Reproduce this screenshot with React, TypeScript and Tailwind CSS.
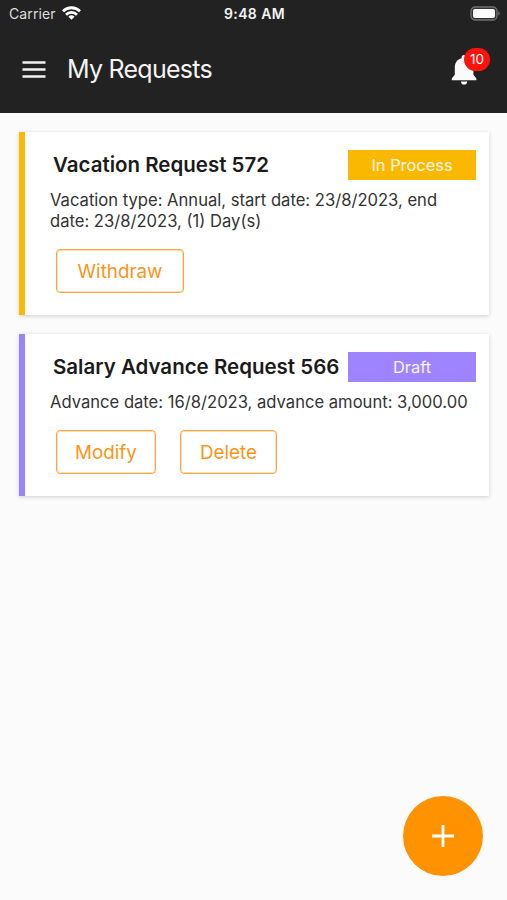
import { useState } from 'react';

const requests = [
    {
        id: 572,
        title: 'Vacation Request 572',
        status: 'In Process',
        border: 'border-[#fbb908]',
        badge: 'bg-[#fbb800]',
        details: 'Vacation type: Annual, start date: 23/8/2023, end date: 23/8/2023, (1) Day(s)',
        actions: [{ label: 'Withdraw', width: 'w-32' }],
    },
    {
        id: 566,
        title: 'Salary Advance Request 566',
        status: 'Draft',
        border: 'border-[#9a83fb]',
        badge: 'bg-[#9e85ff]',
        details: 'Advance date: 16/8/2023, advance amount: 3,000.00',
        actions: [
            { label: 'Modify', width: 'w-[100px]' },
            { label: 'Delete', width: 'w-[97px]' },
        ],
    },
];

function StatusBar() {
    return (
        <div className="grid h-[26px] grid-cols-3 items-center pl-[9px] pr-[7px]">
            <div className="flex items-center gap-1.5 text-[14px] tracking-[0.1px] text-[#dedede]">
                <span>Carrier</span>
                <svg width="19" height="14" viewBox="0 0 19 14" fill="none" stroke="#fff" strokeWidth="2.8">
                    <path d="M1 5.2a12.2 12.2 0 0 1 17 0" />
                    <path d="M4 8.7a7.8 7.8 0 0 1 11 0" />
                    <path d="M9.5 13.8 6.4 10.8a4.5 4.5 0 0 1 6.2 0z" fill="#fff" stroke="none" />
                </svg>
            </div>
            <span className="pt-px text-center text-[14px] font-semibold tracking-[0.4px] text-[#f4f4f4]">9:48 AM</span>
            <svg className="justify-self-end" width="30" height="15" viewBox="0 0 30 15">
                <rect x="1" y="1" width="26" height="13" rx="4" fill="#333" stroke="#707070" strokeWidth="1.3" />
                <rect x="3" y="3" width="22" height="9" rx="2" fill="#fff" />
                <path d="M28.3 5.3a2.4 2.4 0 0 1 0 4.4z" fill="#707070" />
            </svg>
        </div>
    )
}

export default function App() {
    const [count] = useState(10);

    return (
        <div className="flex h-[900px] w-[507px] flex-col bg-[#fbfbfb] font-['Inter',sans-serif] text-[#222]">
            <header className="h-[113px] bg-[#222] text-white">
                <StatusBar />
                <div className="flex h-[87px] items-center pl-[22px] pr-[17px] pt-px">
                    <button aria-label="Menu">
                        <svg width="24" height="18" viewBox="0 0 24 18" stroke="#f2f2f2" strokeWidth="2.3">
                            <path d="M.5 1.500h23M.5 8.500h23M.5 15.500h23" />
                        </svg>
                    </button>
                    <h1 className="ml-[21px] flex-1 text-[25px] tracking-[-0.75px] text-[#f4f4f4]">My Requests</h1>
                    <button aria-label="Notifications" className="relative h-11 w-[39px]">
                        <svg className="absolute left-0 top-[7px]" width="26" height="31" viewBox="0 0 26 31" fill="#fafafa">
                            <path d="M13 0c-1.5 0-2.4 1-2.4 2.4v.8C6.3 4.2 3.8 7.700 3.800 12.500v7.300L.8 23.600V25.300h24.600V23.600l-3-3.800v-7.300c0-4.800-2.500-8.300-7-9.300v-.8C15.400 1 14.500 0 13 0z" />
                            <path d="M10 26.500h6.200a3.100 3.100 0 0 1-6.200 0z" />
                        </svg>
                        <span className="absolute left-[13px] top-0 flex h-[23px] w-[26px] items-center justify-center rounded-full bg-[#fd130c] text-[13.5px] text-white">
                            {count}
                        </span>
                    </button>
                </div>
            </header>

            <main className="flex flex-1 flex-col gap-[19px] pl-[19px] pr-[18px] pt-[19px]">
                {requests.map(request => (
                    <section
                        key={request.id}
                        className={`border-l-[6px] bg-white pb-[22px] pl-[25px] pr-[13px] pt-[18px] shadow-[0_1px_4px_rgba(0,0,0,0.18)] ${request.border}`}
                    >
                        <div className="flex h-[30px] items-center justify-between pl-[3px]">
                            <h2 className="whitespace-nowrap pt-px text-[20.5px] font-semibold text-[#1b1b1b]">{request.title}</h2>
                            <span className={`flex h-[30px] w-32 shrink-0 items-center justify-center text-[16.4px] text-white/90 ${request.badge}`}>
                                {request.status}
                            </span>
                        </div>
                        <p className="mt-[10px] text-[16.6px] leading-[21px] text-[#333]">{request.details}</p>
                        <div className="ml-1.5 mt-[17px] flex gap-6">
                            {request.actions.map(action => (
                                <button
                                    key={action.label}
                                    className={`h-11 rounded-[4px] border border-[#ffa540] pt-0.5 text-[18.8px] text-[#fb9417] shadow-[inset_0_0_0_1px_rgba(255,165,64,0.35)] ${action.width}`}
                                >
                                    {action.label}
                                </button>
                            ))}
                        </div>
                    </section>
                ))}
            </main>

            <footer className="flex justify-end pb-6 pr-6">
                <button aria-label="New request" className="flex size-20 items-center justify-center rounded-full bg-[#ff9200]">
                    <svg width="22" height="22" viewBox="0 0 22 22" stroke="#fff" strokeWidth="2.8">
                        <path d="M11 0v22M0 11h22" />
                    </svg>
                </button>
            </footer>
        </div>
    )
}
